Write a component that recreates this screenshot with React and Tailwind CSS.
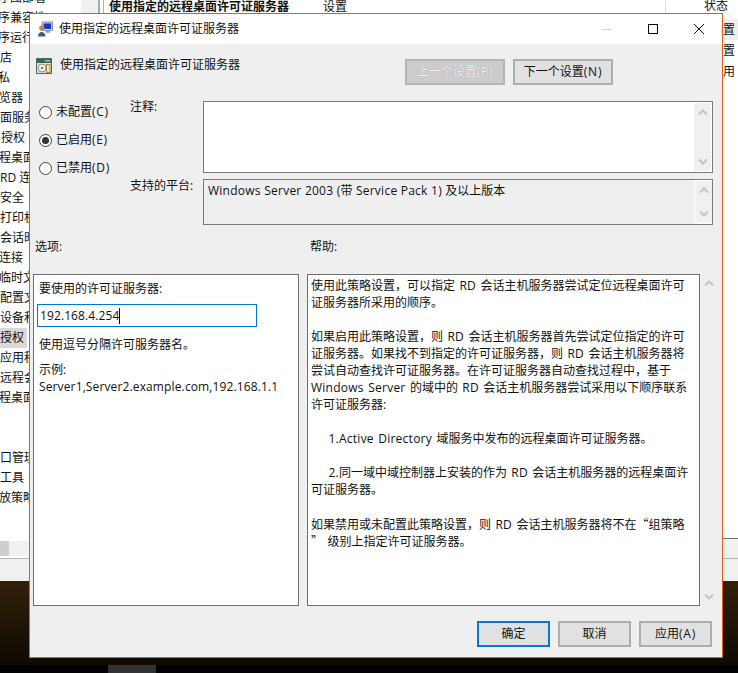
// App.jsx
import React from 'react';

const treeRows = [
  { text: '序图部署', cls: '-ml-[2px]' },
  { text: '序兼容性', cls: '-ml-[2px]' },
  { text: '序运行', cls: '-ml-[2px]' },
  { text: '店', cls: '' },
  { text: '私', cls: '-ml-[2px]' },
  { text: '览器', cls: '-ml-[1px]' },
  { text: '面服务', cls: '' },
  { text: '授权', cls: 'ml-[1px]' },
  { text: '程桌面', cls: '-ml-[1px]' },
  { text: 'RD 连接', cls: '' },
  { text: '安全', cls: '' },
  { text: '打印机', cls: '' },
  { text: '会话时', cls: '' },
  { text: '连接', cls: '-ml-[1px]' },
  { text: '临时文件', cls: '-ml-[1px]' },
  { text: '配置文件', cls: '' },
  { text: '设备和', cls: '' },
  { text: '授权', cls: '', active: true },
  { text: '应用程序', cls: '' },
  { text: '远程会话', cls: '' },
  { text: '程桌面', cls: '-ml-[1px]' },
  { text: '', cls: '' },
  { text: '', cls: '' },
  { text: '口管理', cls: '' },
  { text: '工具', cls: '' },
  { text: '放策略', cls: '-ml-[1px]' },
];

const helpLines = [
  '使用此策略设置，可以指定 RD 会话主机服务器尝试定位远程桌面许可',
  '证服务器所采用的顺序。',
  '',
  '如果启用此策略设置，则 RD 会话主机服务器首先尝试定位指定的许可',
  '证服务器。如果找不到指定的许可证服务器，则 RD 会话主机服务器将',
  '尝试自动查找许可证服务器。在许可证服务器自动查找过程中，基于',
  'Windows Server 的域中的 RD 会话主机服务器尝试采用以下顺序联系',
  '许可证服务器:',
  '',
  '    1.Active Directory 域服务中发布的远程桌面许可证服务器。',
  '',
  '    2.同一域中域控制器上安装的作为 RD 会话主机服务器的远程桌面许',
  '可证服务器。',
  '',
  '如果禁用或未配置此策略设置，则 RD 会话主机服务器将不在“组策略',
  '” 级别上指定许可证服务器。',
];

// latin runs are a bit wider in the screenshot, quotes are full width
function MixedText({ text }) {
  return text.split(/([\x20-\x7e]+|[“”])/).map((part, i) => {
    if (part === '“' || part === '”') {
      return <span key={i} className="font-['Noto_Sans_CJK_SC',sans-serif]">{part}</span>;
    }
    if (/^[\x20-\x7e]+$/.test(part)) {
      return <span key={i} className="tracking-[0.25px]">{part}</span>;
    }
    return part;
  });
}

function Chevron({ down }) {
  return (
    <svg width="10" height="7" viewBox="0 0 10 7" fill="none" stroke="#c4c4c4" strokeWidth="2">
      <path d={down ? 'M1 1.5 L5 5.5 L9 1.5' : 'M1 5.5 L5 1.5 L9 5.5'} />
    </svg>
  );
}

function ScrollTrack({ className }) {
  return (
    <div className={`flex flex-col items-center justify-between py-[6px] ${className}`}>
      <Chevron />
      <Chevron down />
    </div>
  );
}

function Radio({ label, hotkey, checked }) {
  return (
    <div className="flex h-[28px] items-center gap-[4px]">
      <span className="flex h-[13px] w-[13px] items-center justify-center rounded-full border border-[#444] bg-white">
        {checked && <span className="h-[7px] w-[7px] rounded-full bg-[#333]" />}
      </span>
      <span>
        {label}
        <span className="tracking-[0.7px]">{hotkey}</span>
      </span>
    </div>
  );
}

function DialogButton({ children, className = '' }) {
  return (
    <div className={`flex h-[26px] w-[73px] items-center justify-center bg-[#e1e1e1] ${className}`}>
      {children}
    </div>
  );
}

function UserIcon() {
  return (
    <svg width="16" height="16" viewBox="0 0 16 16">
      <rect x="4.5" y="0.5" width="11" height="9" fill="#d8dee6" stroke="#7f8a96" />
      <rect x="6" y="2" width="8" height="6" fill="#1238c4" />
      <rect x="8" y="10" width="5" height="2" fill="#9aa3ad" />
      <circle cx="4" cy="7" r="2.8" fill="#b98a62" />
      <path d="M0 16 C0 9.5 8 9.5 8 16 Z" fill="#3f5a78" />
    </svg>
  );
}

function PolicyIcon() {
  return (
    <svg width="16" height="16" viewBox="0 0 16 16">
      <rect x="0.5" y="0.5" width="15" height="15" fill="#dfe5da" stroke="#4c6a64" />
      <rect x="1" y="1" width="14" height="4" fill="#2f6a62" />
      <rect x="9" y="2" width="5" height="1.5" fill="#d9b24a" />
      <circle cx="6" cy="10" r="4" fill="#f0f0ee" stroke="#8f8f85" />
      <circle cx="6" cy="10" r="1.2" fill="#7d7d70" />
      <rect x="10.5" y="6.5" width="3.5" height="8" fill="#f4e6b8" stroke="#8d7435" strokeWidth="0.8" />
    </svg>
  );
}

function BackgroundWindow() {
  return (
    <div className="flex h-[581px] flex-col bg-white">
      <div className="flex h-[541px] overflow-hidden">
        <div className="w-[81px] shrink-0 -mt-[12px] overflow-hidden">
          {treeRows.map((row, i) => (
            <div
              key={i}
              className={`flex h-[20px] items-center whitespace-nowrap ${row.cls} ${row.active ? 'w-[27px] overflow-hidden bg-[#d9d9d9]' : ''}`}
            >
              {row.text}
            </div>
          ))}
        </div>
        <div className="w-[17px] shrink-0 bg-[#f0f0f0]" />
        <div className="w-[2px] shrink-0 bg-[#a8a8a8]" />
        <div className="w-[3px] shrink-0" />
        <div className="flex flex-1 flex-col border-l border-[#b0b0b0]">
          <div className="-mt-[2px] flex h-[21px] items-start pl-[5px] font-bold leading-[18px]">
            <span className="w-[214px] shrink-0 whitespace-nowrap">使用指定的远程桌面许可证服务器</span>
            <span className="h-[21px] w-[343px] shrink-0 border-r border-[#e0e0e0] font-normal">设置</span>
            <span className="ml-[38px] -mt-px font-normal">状态</span>
          </div>
          <div className="flex h-[21px] items-center bg-[#eeeeee] pl-[595px]">未配置</div>
          <div className="flex h-[21px] items-center pl-[595px]">未配置</div>
          <div className="flex h-[21px] items-center pl-[595px]">已启用</div>
          <div className="mt-auto h-[3px] border-t border-[#6e6e6e] bg-[#f0f0f0]" />
        </div>
      </div>
      <div className="h-[15px] bg-[#f0f0f0]">
        <div className="h-full w-[9px] bg-[#cdcdcd]" />
      </div>
      <div className="flex h-[2px] bg-[#f0f0f0]">
        <div className="w-[29px] bg-white" />
      </div>
      <div className="h-[1px] bg-[#b4b4b4]" />
      <div className="flex-1 bg-[#f0f0f0]" />
    </div>
  );
}

function Dialog() {
  return (
    <div className="absolute left-[29px] top-[13px] flex h-[645px] w-[694px] flex-col border border-[#e2591a] bg-[#efefef]">
      <div className="flex h-[30px] shrink-0 items-center bg-white">
        <div className="ml-[8px] mr-[6px] flex w-[15px] justify-center">
          <UserIcon />
        </div>
        <span className="flex-1 whitespace-nowrap">使用指定的远程桌面许可证服务器</span>
        <div className="flex h-[30px] w-[46px] items-center justify-center">
          <span className="h-px w-[10px] bg-[#cfcfcf]" />
        </div>
        <div className="flex h-[30px] w-[46px] items-center justify-center">
          <span className="h-[10px] w-[10px] border border-black" />
        </div>
        <div className="flex h-[30px] w-[46px] items-center justify-center">
          <svg width="10" height="10" viewBox="0 0 10 10" stroke="#111" strokeWidth="1">
            <path d="M0 0 L10 10 M10 0 L0 10" />
          </svg>
        </div>
      </div>

      <div className="mt-[15px] flex h-[26px] items-center">
        <div className="ml-[6px] mr-[8px] -mt-[12px]">
          <PolicyIcon />
        </div>
        <span className="w-[345px] shrink-0 whitespace-nowrap -mt-[15px]">使用指定的远程桌面许可证服务器</span>
        <div className="flex h-[26px] w-[100px] items-center justify-center border-2 border-[#b4b4b4] bg-[#cccccc] text-[#f4f4f4] [text-shadow:0_0_1px_#8a8a8a]">
          上一个设置<span className="tracking-[0.8px]">(P)</span>
        </div>
        <div className="ml-[8px] flex h-[26px] w-[100px] items-center justify-center border-2 border-[#adadad] bg-[#e1e1e1]">
          下一个设置<span className="tracking-[0.8px]">(N)</span>
        </div>
      </div>

      <div className="mt-[13px] flex">
        <div className="w-[100px] shrink-0 pl-[9px]">
          <Radio label="未配置" hotkey="(C)" />
          <Radio label="已启用" hotkey="(E)" checked />
          <Radio label="已禁用" hotkey="(D)" />
        </div>
        <div className="flex-1">
          <div className="flex">
            <div className="w-[73px] shrink-0 leading-[17px]">注释:</div>
            <div className="mt-[3px] flex h-[72px] w-[510px] justify-end border border-[#7a7a7a] bg-white p-px">
              <ScrollTrack className="w-[17px] bg-[#f0f0f0]" />
            </div>
          </div>
          <div className="mt-[4px] flex">
            <div className="w-[73px] shrink-0 leading-[17px]">支持的平台:</div>
            <div className="mt-[2px] flex h-[46px] w-[510px] border border-[#7a7a7a] bg-[#efefef]">
              <div className="flex-1 pl-[4px] pt-[2px] leading-[17px]">
                <MixedText text="Windows Server 2003 (带 Service Pack 1) 及以上版本" />
              </div>
              <ScrollTrack className="w-[18px] border-l border-t border-b border-white bg-[#f0f0f0]" />
            </div>
          </div>
        </div>
      </div>

      <div className="mt-[13px] flex h-[17px] items-center pl-[5px] leading-[17px]">
        <span className="w-[275px] shrink-0">选项:</span>
        <span>帮助:</span>
      </div>

      <div className="mt-[19px] flex h-[332px] pl-[3px]">
        <div className="w-[266px] shrink-0 border border-[#6e6e6e] bg-white pl-[5px] pt-[5px] leading-[17px]">
          <div>要使用的许可证服务器:</div>
          <div className="-ml-[2px] mt-[7px] flex h-[23px] w-[220px] items-center border border-[#0078d7] pl-[2px]">
            <span className="tracking-[0.1px]">192.168.4.254</span>
            <span className="h-[16px] w-px bg-black" />
          </div>
          <div className="mt-[9px]">使用逗号分隔许可服务器名。</div>
          <div className="mt-[9px] h-[16px] leading-[16px]">示例:</div>
          <div className="whitespace-nowrap tracking-[0.13px]">Server1,Server2.example.com,192.168.1.1</div>
        </div>
        <div className="ml-[8px] w-[393px] shrink-0 border border-[#6e6e6e] bg-white pl-[3px] pt-[2px] leading-[17px] [word-spacing:1px]">
          {helpLines.map((line, i) => (
            <div key={i} className="h-[17px] whitespace-pre">
              <MixedText text={line} />
            </div>
          ))}
        </div>
        <ScrollTrack className="w-[17px]" />
      </div>

      <div className="mt-[15px] flex justify-end gap-[8px] pr-[10px]">
        <DialogButton className="border-2 border-[#0078d7]">确定</DialogButton>
        <DialogButton className="border-2 border-[#adadad]">取消</DialogButton>
        <DialogButton className="border-2 border-[#adadad]">
          应用<span className="tracking-[0.8px]">(A)</span>
        </DialogButton>
      </div>
    </div>
  );
}

export default function App() {
  return (
    <div className="relative h-[673px] w-[738px] overflow-hidden bg-black font-['Open_Sans','Noto_Sans_CJK_SC',sans-serif] text-[12px] text-[#111]">
      <BackgroundWindow />
      <div className="h-[84px] bg-gradient-to-b from-[#33200a] to-[#0e0a04]" />
      <div className="flex h-[8px] bg-black pl-[108px]">
        <div className="w-[48px] bg-[#333333]" />
      </div>
      <Dialog />
    </div>
  );
}
